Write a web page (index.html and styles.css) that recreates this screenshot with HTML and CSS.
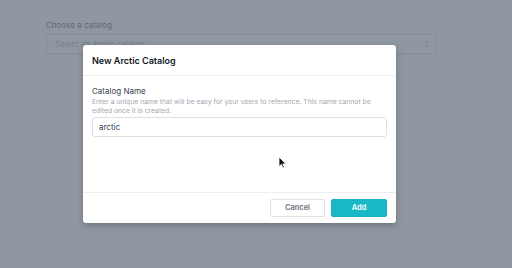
FILE: index.html
```html
<!DOCTYPE html>
<html>
<head>
<meta charset="utf-8">
<link rel="stylesheet" href="styles.css">
</head>
<body>
<div class="page">
  <div class="field-label">Choose a catalog</div>
  <div class="select">
    <span class="placeholder">Select an Arctic catalog</span>
    <svg class="chev" width="6" height="8" viewBox="0 0 6 8"><path d="M1 3 L3 1 L5 3 M1 5 L3 7 L5 5" fill="none" stroke="#9ca3af" stroke-width="1"/></svg>
  </div>
</div>
<div class="overlay"></div>
<div class="modal">
  <div class="modal-header">New Arctic Catalog</div>
  <div class="modal-body">
    <div class="label">Catalog Name</div>
    <div class="hint">Enter a unique name that will be easy for your users to reference. This name cannot be edited once it is created.</div>
    <div class="input">arctic</div>
  </div>
  <div class="modal-footer">
    <button class="btn btn-cancel">Cancel</button>
    <button class="btn btn-add">Add</button>
  </div>
</div>
<svg class="cursor" width="9" height="13" viewBox="0 0 9 13"><path d="M1 1 L1 10.5 L3.3 8.4 L5 12 L6.4 11.4 L4.8 7.9 L7.8 7.9 Z" fill="#111" stroke="#fff" stroke-width="0.8"/></svg>
</body>
</html>
```
FILE: styles.css
```css
* { box-sizing: border-box; }
html, body { margin: 0; padding: 0; }
body {
  width: 512px;
  height: 268px;
  background: #fff;
  font-family: Inter, "Noto Sans", sans-serif;
  position: relative;
  overflow: hidden;
}
.page {
  padding: 20px 75px 0 46px;
}
.field-label {
  font-size: 8px;
  line-height: 10px;
  color: #374151;
}
.select {
  margin-top: 4px;
  height: 20px;
  border: 1px solid #d1d5db;
  border-radius: 3px;
  display: flex;
  align-items: center;
  justify-content: space-between;
  padding: 0 6px 0 8px;
}
.placeholder {
  font-size: 8px;
  color: #9ca3af;
}
.overlay {
  position: absolute;
  inset: 0;
  background: rgba(106, 118, 130, 0.75);
}
.modal {
  position: absolute;
  left: 83px;
  top: 45px;
  width: 313px;
  height: 178px;
  background: #fff;
  border-radius: 3px;
  box-shadow: 0 2px 6px rgba(0,0,0,0.25);
  display: flex;
  flex-direction: column;
}
.modal-header {
  height: 31px;
  padding: 0 9px;
  display: flex;
  align-items: center;
  font-size: 9px;
  font-weight: 600;
  color: #111827;
  border-bottom: 1px solid #eceef0;
}
.modal-body {
  flex: 1;
  padding: 10px 9px 0 9px;
}
.label {
  font-size: 8px;
  line-height: 10px;
  color: #374151;
}
.hint {
  font-size: 6.8px;
  line-height: 9px;
  color: #a3a9b1;
  margin-top: 1px;
}
.input {
  margin-top: 2px;
  height: 20px;
  border: 1px solid #dcdfe3;
  border-radius: 3px;
  padding-left: 6px;
  display: flex;
  align-items: center;
  font-size: 8px;
  color: #374151;
}
.modal-footer {
  height: 31px;
  border-top: 1px solid #eceef0;
  display: flex;
  justify-content: flex-end;
  align-items: center;
  gap: 6px;
  padding: 0 9px 1px 0;
}
.btn {
  height: 18px;
  border-radius: 2px;
  font-family: Inter, "Noto Sans", sans-serif;
  font-size: 7.5px;
  font-weight: 600;
  padding: 0;
}
.btn-cancel {
  width: 55px;
  background: #fff;
  border: 1px solid #dfe2e6;
  color: #6b7280;
}
.btn-add {
  width: 56px;
  background: #1ab8c6;
  border: 1px solid #17b0be;
  color: #fff;
}
.cursor {
  position: absolute;
  left: 278px;
  top: 156px;
}
```
